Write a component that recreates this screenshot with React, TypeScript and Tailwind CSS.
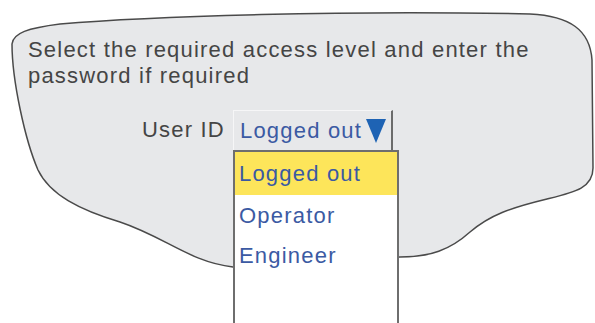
import React from "react";

const options = ["Logged out", "Operator", "Engineer"];

function Blob() {
  return (
    <svg className="absolute inset-0" width="595" height="323" viewBox="0 0 595 323">
      <path
        d="M 12 44 C 13 33, 28 28, 60 24 C 150 16, 350 10, 530 14 C 570 16, 590 30, 592 60 L 593 168 C 593 188, 575 192, 547 199 C 510 208, 490 215, 470 232 C 450 250, 430 257, 400 257 L 233 267 C 190 262, 165 237, 120 222 C 80 210, 50 195, 38 170 C 25 140, 12 80, 12 44 Z"
        fill="#e7e8ea"
        stroke="#4a4a4a"
        strokeWidth="1.5"
      />
    </svg>
  );
}

export default function App() {
  return (
    <div
      className="relative h-[323px] w-[595px] overflow-hidden bg-white tracking-[1.2px]"
      style={{ fontFamily: '"Liberation Sans", Arial, sans-serif' }}
    >
      <Blob />
      <div className="relative flex flex-col pl-[28px] pt-[37px]">
        <p className="text-[22px] leading-[26px] text-[#454545]">
          Select the required access level and enter the
          <br />
          password if required
        </p>
        <div className="mt-[21px] flex items-start pl-[114px]">
          <span className="mt-[8px] w-[91px] text-[22px] leading-[24px] text-[#454545]">User ID</span>
          <div className="flex flex-col">
            <div className="flex h-[40px] w-[160px] items-center border-t border-l border-t-[#f6f6f7] border-l-[#f6f6f7] border-r-2 border-r-[#6b6b6b] bg-[#e7e8ea] pl-[6px]">
              <span className="text-[22px] text-[#3b5aa3]">Logged out</span>
              <svg className="ml-[4px]" width="20" height="24" viewBox="0 0 20 24">
                <polygon points="0,0 20,0 10,24" fill="#1e63b4" />
              </svg>
            </div>
            <div className="flex h-[175px] w-[166px] flex-col border-2 border-[#6e6e6e] bg-white">
              {options.map((o, i) => (
                <div
                  key={o}
                  className={
                    i === 0
                      ? "flex h-[43px] items-center bg-[#fde55a] pl-[4px] text-[22px] text-[#3b5aa3]"
                      : "flex h-[40px] items-center pl-[4px] text-[22px] text-[#3b5aa3]"
                  }
                >
                  {o}
                </div>
              ))}
            </div>
          </div>
        </div>
      </div>
    </div>
  );
}
